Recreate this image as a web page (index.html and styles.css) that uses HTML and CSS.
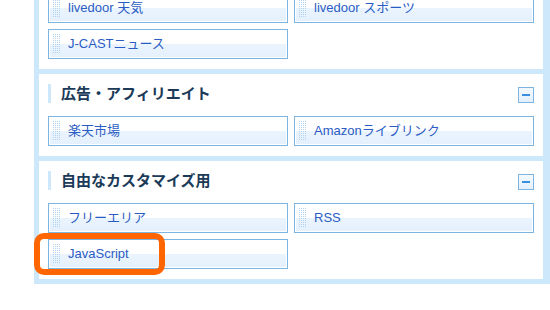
FILE: index.html
```html
<!DOCTYPE html>
<html lang="ja">
<head>
    <meta charset="UTF-8">
    <meta name="viewport" content="width=device-width, initial-scale=1.0">
    <title>ブログパーツ</title>
    <link rel="stylesheet" href="styles.css">
</head>
<body>
    <div class="sidebar">
        <div class="group">
            <div class="group-head">
                <h2>ニュース・天気</h2>
                <button class="fold" aria-label="閉じる"></button>
            </div>
            <div class="parts">
                <div class="part">livedoor 天気</div>
                <div class="part">livedoor スポーツ</div>
                <div class="part">J-CASTニュース</div>
            </div>
        </div>

        <div class="group">
            <div class="group-head">
                <h2>広告・アフィリエイト</h2>
                <button class="fold" aria-label="閉じる"></button>
            </div>
            <div class="parts">
                <div class="part">楽天市場</div>
                <div class="part">Amazonライブリンク</div>
            </div>
        </div>

        <div class="group">
            <div class="group-head">
                <h2>自由なカスタマイズ用</h2>
                <button class="fold" aria-label="閉じる"></button>
            </div>
            <div class="parts">
                <div class="part">フリーエリア</div>
                <div class="part">RSS</div>
                <div class="part marked">JavaScript</div>
            </div>
        </div>
    </div>
</body>
</html>
```

FILE: styles.css
```css
*, *::before, *::after {
    box-sizing: border-box;
}

body {
    margin: 0;
    background: #fff;
    font-family: "Liberation Sans", "Noto Sans CJK JP", sans-serif;
    overflow: hidden;
}

.sidebar {
    width: 516px;
    margin: -54px 0 0 34px;
    border: 5px solid #cde7fb;
    border-top: none;
    border-right-width: 7px;
}

.group {
    border-top: 5px solid #cde7fb;
    padding: 10px 9px 10px;
}

.group-head {
    display: flex;
    justify-content: space-between;
    align-items: center;
    height: 19px;
    margin-bottom: 13px;
}

.group-head h2 {
    margin: 0;
    height: 19px;
    line-height: 19px;
    padding-left: 10px;
    border-left: 3px solid #cde7fb;
    font-size: 15px;
    font-weight: bold;
    color: #1b3a58;
}

.fold {
    align-self: flex-end;
    width: 16px;
    height: 16px;
    padding: 0;
    border: 1px solid #7cb5e2;
    background: linear-gradient(#f4f9ff, #e4f0fc);
    display: flex;
    align-items: center;
    justify-content: center;
}

.fold::before {
    content: "";
    width: 8px;
    height: 2px;
    background: #3a8fe0;
}

.parts {
    display: grid;
    grid-template-columns: 240px 240px;
    gap: 6px;
}

.part {
    position: relative;
    height: 30px;
    line-height: 28px;
    padding-left: 19px;
    border: 1px solid #7cb5e2;
    box-shadow: inset 0 0 0 1px #fff;
    background: linear-gradient(#fff 50%, #eaf4fe 50%, #e4f0fd);
    font-size: 13px;
    color: #2a5cc4;
}

.part::before {
    content: "";
    position: absolute;
    left: 3px;
    top: 3px;
    width: 8px;
    height: 21px;
    background-image: conic-gradient(from 90deg at 1px 1px, #b2d3f1 90deg, transparent 0);
    background-size: 2px 2px;
}

.marked::after {
    content: "";
    position: absolute;
    left: -15px;
    top: -7px;
    width: 131px;
    height: 42px;
    border: 6px solid #ff6500;
    border-radius: 10px;
}
```
